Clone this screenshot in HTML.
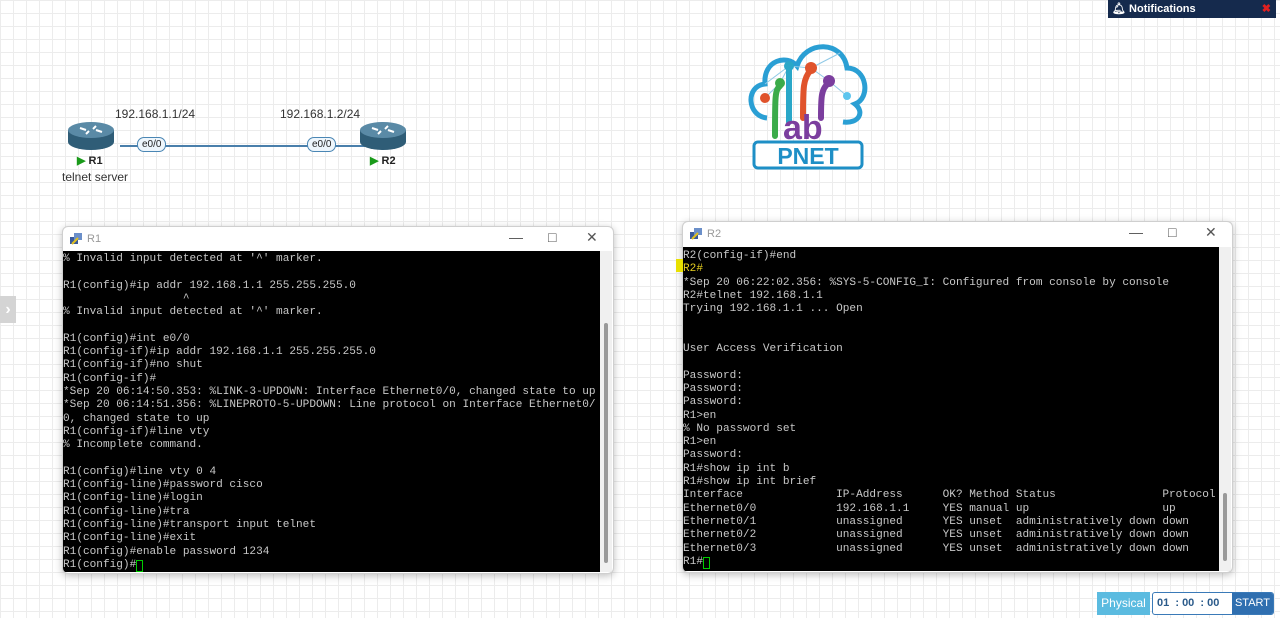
<!DOCTYPE html>
<html><head><meta charset="utf-8">
<style>
html,body{margin:0;padding:0}
body{width:1280px;height:618px;overflow:hidden;position:relative;font-family:"Liberation Sans",sans-serif;
background-color:#fff;
background-image:linear-gradient(#ececec 1px,transparent 1px),linear-gradient(90deg,#ececec 1px,transparent 1px);
background-size:13px 13px;}
.abs{position:absolute}
.lbl{font-size:12px;color:#333}
.pill{position:absolute;border:1.5px solid #4a86b4;border-radius:7px;background:#eef6fc;font-size:10px;padding:0 4px;height:13px;line-height:13px;color:#222}
.win{position:absolute;background:#fff;border:1px solid #cfcfcf;border-radius:6px;box-shadow:0 2px 8px rgba(0,0,0,.25);overflow:hidden}
.tb{height:24px;position:relative;font-size:11px;color:#999}
.tb .t{position:absolute;left:24px;top:6px}
.tb .c{position:absolute;top:2px;font-size:14px;color:#555}
.term{position:absolute;background:#000;color:#c8c8c8;font-family:"Liberation Mono",monospace;font-size:11.1px;line-height:13.3px;white-space:pre;overflow:hidden;box-sizing:border-box;padding-top:2px}
.sb{position:absolute;background:#f0f0f0}
.sb i{position:absolute;left:4px;width:4px;background:#999;border-radius:2px}
.cur{display:inline-block;width:5px;height:10px;border:1px solid #0c0;vertical-align:top;margin-top:1px}
</style></head><body>

<div class="abs" style="left:1108px;top:0;width:168px;height:18px;background:#152a4d;color:#fff;font-size:11px;font-weight:bold;line-height:18px">
<span style="margin-left:4px">&#128276;&#xFE0E;</span> Notifications<span style="position:absolute;right:5px;color:#e02020">&#10006;</span></div>

<div class="abs" style="left:0;top:296px;width:16px;height:27px;background:#d4d4d4;color:#fff;font-size:16px;line-height:27px;text-align:center;font-weight:bold">&#8250;</div>

<div class="abs" style="left:120px;top:145px;width:250px;height:2px;background:#4a7fab"></div>
<div class="pill" style="left:137px;top:137px">e0/0</div>
<div class="pill" style="left:307px;top:137px">e0/0</div>
<div class="abs lbl" style="left:115px;top:107px">192.168.1.1/24</div>
<div class="abs lbl" style="left:280px;top:107px">192.168.1.2/24</div>

<svg class="abs" style="left:66px;top:120px" width="50" height="32" viewBox="0 0 50 32">
<path d="M2 10 V22 A23 8 0 0 0 48 22 V10 Z" fill="#2f5d77"/><ellipse cx="25" cy="10" rx="23" ry="8" fill="#5a8aa6"/>
<path d="M14 8l6 2M36 12l-6-2M30 6l-3 3M20 14l3-3" stroke="#fff" stroke-width="2"/></svg>
<svg class="abs" style="left:358px;top:120px" width="50" height="32" viewBox="0 0 50 32">
<path d="M2 10 V22 A23 8 0 0 0 48 22 V10 Z" fill="#2f5d77"/><ellipse cx="25" cy="10" rx="23" ry="8" fill="#5a8aa6"/>
<path d="M14 8l6 2M36 12l-6-2M30 6l-3 3M20 14l3-3" stroke="#fff" stroke-width="2"/></svg>
<div class="abs" style="left:77px;top:154px;font-size:11px;font-weight:bold;color:#222"><span style="color:#1a9a1a">&#9654;</span> R1</div>
<div class="abs" style="left:370px;top:154px;font-size:11px;font-weight:bold;color:#222"><span style="color:#1a9a1a">&#9654;</span> R2</div>
<div class="abs lbl" style="left:62px;top:170px">telnet server</div>

<svg class="abs" style="left:745px;top:38px" width="125" height="138" viewBox="0 0 125 138">
<path d="M22 80 C2 78 0 48 20 46 C18 22 42 16 52 28 C60 2 98 2 102 30 C122 30 126 60 110 66 C120 74 114 86 98 84" fill="none" stroke="#2a9fd4" stroke-width="5"/>
<g stroke="#8fc9e6" stroke-width="1" fill="none"><path d="M20 60L35 45L44 28L66 30L84 43L102 58M44 28L20 46M66 30L95 15"/></g>
<g stroke-width="6" fill="none" stroke-linecap="round">
<path d="M35 48 C30 52 30 58 30 98" stroke="#3bab4a"/><path d="M44 30 V84" stroke="#2aa7c8"/><path d="M66 32 C58 40 58 50 58 80" stroke="#e0532c"/><path d="M84 45 C76 50 76 60 76 80" stroke="#7b3e9e"/>
</g>
<circle cx="20" cy="60" r="5" fill="#e0532c"/><circle cx="35" cy="45" r="5" fill="#3bab4a"/><circle cx="44" cy="28" r="5" fill="#2aa7c8"/><circle cx="66" cy="30" r="6" fill="#e0532c"/><circle cx="84" cy="43" r="6" fill="#7b3e9e"/><circle cx="102" cy="58" r="4" fill="#5cc5ee"/>
<text x="38" y="101" font-family="Liberation Sans" font-weight="bold" font-size="34" fill="#7b3e9e">ab</text>
<rect x="9" y="104" width="108" height="26" rx="4" fill="#fff" stroke="#1e8fc6" stroke-width="3"/>
<text x="63" y="126" text-anchor="middle" font-family="Liberation Sans" font-weight="bold" font-size="23" fill="#1e8fc6">PNET</text>
</svg>

<div class="win" style="left:62px;top:226px;width:550px;height:346px">
 <div class="tb"><svg class="abs" style="left:6px;top:5px" width="14" height="14"><rect x="1" y="5" width="8" height="7" fill="#3a5a9a"/><rect x="5" y="1" width="8" height="7" fill="#6b8fc9"/><path d="M3 12l6-6" stroke="#e0c020" stroke-width="2"/></svg><span class="t">R1</span>
 <span class="c" style="left:446px">&#8212;</span><span class="c" style="left:485px">&#9633;</span><span class="c" style="left:523px">&#10005;</span></div>
 <div class="term" style="left:0;top:24px;width:548px;height:321px">% Invalid input detected at '^' marker.

R1(config)#ip addr 192.168.1.1 255.255.255.0
                  ^
% Invalid input detected at '^' marker.

R1(config)#int e0/0
R1(config-if)#ip addr 192.168.1.1 255.255.255.0
R1(config-if)#no shut
R1(config-if)#
*Sep 20 06:14:50.353: %LINK-3-UPDOWN: Interface Ethernet0/0, changed state to up
*Sep 20 06:14:51.356: %LINEPROTO-5-UPDOWN: Line protocol on Interface Ethernet0/
0, changed state to up
R1(config-if)#line vty
% Incomplete command.

R1(config)#line vty 0 4
R1(config-line)#password cisco
R1(config-line)#login
R1(config-line)#tra
R1(config-line)#transport input telnet
R1(config-line)#exit
R1(config)#enable password 1234
R1(config)#<span class="cur"></span></div>
 <div class="sb" style="left:537px;top:24px;width:12px;height:321px"><i style="top:72px;height:240px"></i></div>
</div>

<div class="win" style="left:682px;top:221px;width:549px;height:350px">
 <div class="tb"><svg class="abs" style="left:6px;top:5px" width="14" height="14"><rect x="1" y="5" width="8" height="7" fill="#3a5a9a"/><rect x="5" y="1" width="8" height="7" fill="#6b8fc9"/><path d="M3 12l6-6" stroke="#e0c020" stroke-width="2"/></svg><span class="t">R2</span>
 <span class="c" style="left:446px">&#8212;</span><span class="c" style="left:485px">&#9633;</span><span class="c" style="left:522px">&#10005;</span></div>
 <div class="term" style="left:0;top:25px;width:547px;height:324px;padding-top:3px">R2(config-if)#end
<span style="color:#e8d020">R2#</span>
*Sep 20 06:22:02.356: %SYS-5-CONFIG_I: Configured from console by console
R2#telnet 192.168.1.1
Trying 192.168.1.1 ... Open


User Access Verification

Password:
Password:
Password:
R1>en
% No password set
R1>en
Password:
R1#show ip int b
R1#show ip int brief
Interface              IP-Address      OK? Method Status                Protocol
Ethernet0/0            192.168.1.1     YES manual up                    up
Ethernet0/1            unassigned      YES unset  administratively down down
Ethernet0/2            unassigned      YES unset  administratively down down
Ethernet0/3            unassigned      YES unset  administratively down down
R1#<span class="cur"></span></div>
 <div class="sb" style="left:536px;top:25px;width:12px;height:324px"><i style="top:246px;height:68px"></i></div>
</div>
<div class="abs" style="left:676px;top:259px;width:7px;height:13px;background:#e8e000"></div>

<div class="abs" style="left:1097px;top:592px;width:53px;height:23px;background:#5bbbe0;color:#fff;font-size:12px;line-height:23px;text-align:center">Physical</div>
<div class="abs" style="left:1152px;top:592px;width:120px;height:21px;border:1px solid #3a7ab8;border-radius:3px;background:#fff;overflow:hidden">
<span class="abs" style="left:4px;top:4px;font-size:11px;font-weight:bold;color:#2a5a8a">01 &nbsp;: 00 &nbsp;: 00</span>
<span class="abs" style="left:79px;top:0;width:41px;height:21px;background:#2f6fb0;color:#fff;font-size:11px;line-height:21px;text-align:center">START</span></div>
</body></html>
